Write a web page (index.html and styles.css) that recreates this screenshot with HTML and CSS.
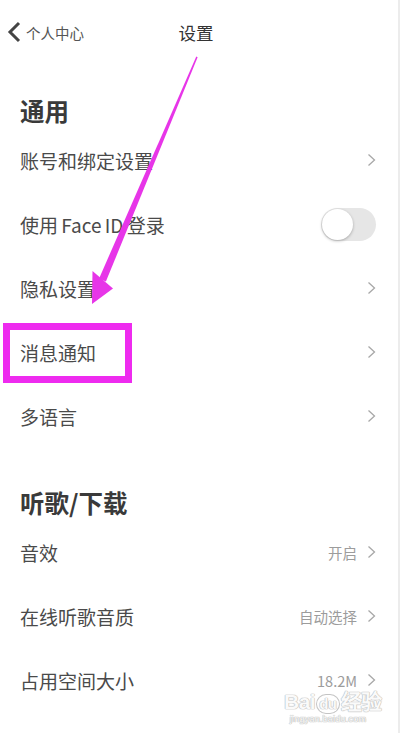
FILE: index.html
```html
<!DOCTYPE html>
<html lang="zh-CN">
<head>
    <meta charset="UTF-8">
    <meta name="viewport" content="width=device-width, initial-scale=1.0">
    <title>设置</title>
    <link rel="stylesheet" href="styles.css">
</head>
<body>

    <div class="page">
        <div class="header">
            <div class="back">
                <svg width="14" height="22" viewBox="0 0 14 22"><path d="M12 2 L3 11 L12 20" fill="none" stroke="#444" stroke-width="3" stroke-linejoin="miter"/></svg>
                <span>个人中心</span>
            </div>
            <div class="title">设置</div>
            <div></div>
        </div>

        <div class="section first">
            <h2 class="section-title">通用</h2>
            <div class="row">
                <span class="label">账号和绑定设置</span>
                <span class="right"><svg class="chev" width="9" height="14" viewBox="0 0 9 14"><path d="M1.5 1.5 L7.5 7 L1.5 12.5" fill="none" stroke="#a8a8a8" stroke-width="1.3"/></svg></span>
            </div>
            <div class="row">
                <span class="label">使用 Face ID 登录</span>
                <span class="toggle"><span class="knob"></span></span>
            </div>
            <div class="row">
                <span class="label">隐私设置</span>
                <span class="right"><svg class="chev" width="9" height="14" viewBox="0 0 9 14"><path d="M1.5 1.5 L7.5 7 L1.5 12.5" fill="none" stroke="#a8a8a8" stroke-width="1.3"/></svg></span>
            </div>
            <div class="row">
                <span class="label">消息通知</span>
                <span class="right"><svg class="chev" width="9" height="14" viewBox="0 0 9 14"><path d="M1.5 1.5 L7.5 7 L1.5 12.5" fill="none" stroke="#a8a8a8" stroke-width="1.3"/></svg></span>
            </div>
            <div class="row">
                <span class="label">多语言</span>
                <span class="right"><svg class="chev" width="9" height="14" viewBox="0 0 9 14"><path d="M1.5 1.5 L7.5 7 L1.5 12.5" fill="none" stroke="#a8a8a8" stroke-width="1.3"/></svg></span>
            </div>
        </div>

        <div class="section">
            <h2 class="section-title">听歌/下载</h2>
            <div class="row">
                <span class="label">音效</span>
                <span class="right"><span class="value">开启</span><svg class="chev" width="9" height="14" viewBox="0 0 9 14"><path d="M1.5 1.5 L7.5 7 L1.5 12.5" fill="none" stroke="#a8a8a8" stroke-width="1.3"/></svg></span>
            </div>
            <div class="row">
                <span class="label">在线听歌音质</span>
                <span class="right"><span class="value">自动选择</span><svg class="chev" width="9" height="14" viewBox="0 0 9 14"><path d="M1.5 1.5 L7.5 7 L1.5 12.5" fill="none" stroke="#a8a8a8" stroke-width="1.3"/></svg></span>
            </div>
            <div class="row">
                <span class="label">占用空间大小</span>
                <span class="right"><span class="value">18.2M</span><svg class="chev" width="9" height="14" viewBox="0 0 9 14"><path d="M1.5 1.5 L7.5 7 L1.5 12.5" fill="none" stroke="#a8a8a8" stroke-width="1.3"/></svg></span>
            </div>
        </div>

        <!-- annotation drawn over the screenshot -->
        <div class="mark-box"></div>
        <svg class="mark-arrow" width="401" height="733" viewBox="0 0 401 733">
            <polygon points="196.3,56.5 197.6,57.2 105.9,281.6 99.1,278.4" fill="#e735e8"/>
            <polygon points="92.5,271 113,288.5 92,304" fill="#e735e8"/>
        </svg>

        <div class="watermark">
            <div class="wm-logo">Bai<span class="wm-du">du</span>经验</div>
            <div class="wm-url">jingyan.baidu.com</div>
        </div>
    </div>

</body>
</html>
```

FILE: styles.css
```css
body {
    margin: 0;
    background-color: #fff;
    font-family: "Noto Sans CJK SC", "Noto Sans", sans-serif;
    color: #4a4a4a;
}

.page {
    position: relative;
    width: 400px;
    height: 733px;
    box-sizing: border-box;
    border-right: 2px solid #ececec;
    overflow: hidden;
}

.header {
    display: grid;
    grid-template-columns: 1fr auto 1fr;
    align-items: center;
    height: 64px;
}

.back {
    display: flex;
    align-items: center;
    padding-left: 7px;
    gap: 5px;
    font-size: 14.5px;
    color: #555;
}

.title {
    font-size: 17.5px;
    color: #333;
    margin-left: -6px;
}

.section.first {
    padding-top: 30px;
}

.section {
    padding-top: 38px;
}

.section-title {
    margin: 0;
    padding-left: 20px;
    height: 34px;
    line-height: 34px;
    font-size: 24.5px;
    font-weight: 700;
    color: #3a3a3a;
}

.row {
    display: flex;
    align-items: center;
    justify-content: space-between;
    height: 64px;
    padding: 0 22px 0 20px;
}

.label {
    font-size: 19px;
    color: #4a4a4a;
    word-spacing: -1px;
}

.right {
    display: flex;
    align-items: center;
    gap: 10px;
}

.value {
    font-size: 14.5px;
    color: #9c9c9c;
}

.chev {
    display: block;
}

.toggle {
    display: flex;
    align-items: center;
    width: 55px;
    height: 33px;
    padding: 0 1px;
    box-sizing: border-box;
    border-radius: 17px;
    background-color: #e6e6e6;
}

.knob {
    width: 31px;
    height: 31px;
    border-radius: 50%;
    background-color: #fff;
    box-shadow: 0 1px 3px rgba(0, 0, 0, 0.28);
}

.mark-box {
    position: absolute;
    left: 3px;
    top: 323px;
    width: 129px;
    height: 60px;
    box-sizing: border-box;
    border: 7px solid #ee2bef;
}

.mark-arrow {
    position: absolute;
    left: 0;
    top: 0;
}

.watermark {
    position: absolute;
    left: 284px;
    top: 691px;
    width: 88px;
    color: #fafafa;
    text-shadow: 0 0 1px #b8b8b8, 0 0 1px #b8b8b8, 0 0 1px #b8b8b8;
    text-align: center;
}

.wm-logo {
    font-family: "Liberation Sans", sans-serif;
    font-size: 21px;
    font-weight: 700;
    line-height: 22px;
    letter-spacing: -0.5px;
    white-space: nowrap;
}

.wm-du {
    display: inline-block;
    margin: 0 2px;
    padding: 0 2px;
    border-radius: 10px;
    box-shadow: 0 0 0 1px #c4c4c4;
    font-size: 15px;
    line-height: 18px;
}

.wm-url {
    font-family: "Liberation Sans", sans-serif;
    font-size: 9.5px;
    line-height: 12px;
}
```
